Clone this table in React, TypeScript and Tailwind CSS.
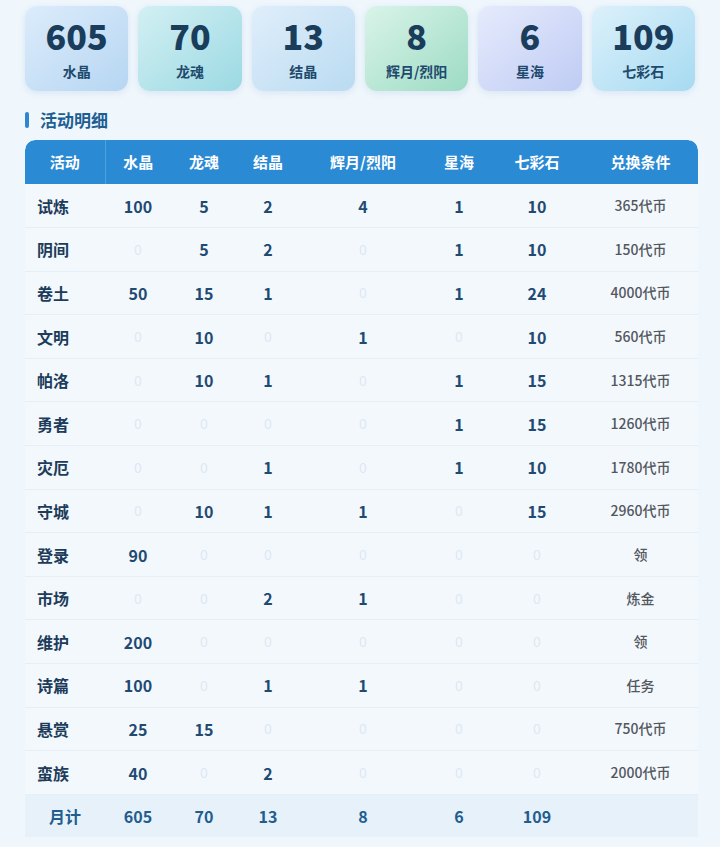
const stats = [
  { value: 605, label: "水晶", bg: "bg-gradient-to-br from-[#dcecfb] to-[#b6d6f2]" },
  { value: 70, label: "龙魂", bg: "bg-gradient-to-br from-[#d2f0f3] to-[#9bd9e3]" },
  { value: 13, label: "结晶", bg: "bg-gradient-to-br from-[#e0eefa] to-[#b9dbf2]" },
  { value: 8, label: "辉月/烈阳", bg: "bg-gradient-to-br from-[#d9f4e9] to-[#9cdbc4]" },
  { value: 6, label: "星海", bg: "bg-gradient-to-br from-[#e6ebfc] to-[#bfcbf4]" },
  { value: 109, label: "七彩石", bg: "bg-gradient-to-br from-[#dcf1fb] to-[#a6daf1]" },
];

const headers = ["活动", "水晶", "龙魂", "结晶", "辉月/烈阳", "星海", "七彩石", "兑换条件"];
const widths = ["w-[80px]", "w-[66px]", "w-[66px]", "w-[62px]", "w-[128px]", "w-[64px]", "w-[92px]", "w-[115px]"];

type Row = [string, number, number, number, number, number, number, string];

const rows: Row[] = [
  ["试炼", 100, 5, 2, 4, 1, 10, "365代币"],
  ["阴间", 0, 5, 2, 0, 1, 10, "150代币"],
  ["卷土", 50, 15, 1, 0, 1, 24, "4000代币"],
  ["文明", 0, 10, 0, 1, 0, 10, "560代币"],
  ["帕洛", 0, 10, 1, 0, 1, 15, "1315代币"],
  ["勇者", 0, 0, 0, 0, 1, 15, "1260代币"],
  ["灾厄", 0, 0, 1, 0, 1, 10, "1780代币"],
  ["守城", 0, 10, 1, 1, 0, 15, "2960代币"],
  ["登录", 90, 0, 0, 0, 0, 0, "领"],
  ["市场", 0, 0, 2, 1, 0, 0, "炼金"],
  ["维护", 200, 0, 0, 0, 0, 0, "领"],
  ["诗篇", 100, 0, 1, 1, 0, 0, "任务"],
  ["悬赏", 25, 15, 0, 0, 0, 0, "750代币"],
  ["蛮族", 40, 0, 2, 0, 0, 0, "2000代币"],
];

const totals = [605, 70, 13, 8, 6, 109];

export default function App() {
  return (
    <div className="min-h-[847px] w-[720px] bg-[#eff6fc] px-[25px] pt-[6px] font-['Noto_Sans_CJK_SC','Noto_Sans',sans-serif]">
      <div className="flex gap-[10px]">
        {stats.map((s) => (
          <div
            key={s.label}
            className={`flex h-[85px] w-[104px] flex-col items-center pt-[13px] rounded-[12px] shadow-[0_2px_6px_rgba(120,160,200,0.18)] ${s.bg}`}
          >
            <div className="text-[34px] font-black leading-[34px] text-[#1a3d5c]">{s.value}</div>
            <div className="mt-[8px] text-[14px] font-bold leading-[20px] text-[#1f4a6d]">{s.label}</div>
          </div>
        ))}
      </div>

      <div className="mt-[18px] flex items-center gap-[11px]">
        <div className="h-[16px] w-[4px] rounded-full bg-[#2e86cc]" />
        <div className="text-[17px] font-bold leading-[22px] text-[#1d5f93]">活动明细</div>
      </div>

      <table className="mt-[9px] w-[673px] table-fixed border-collapse overflow-hidden rounded-t-[10px] bg-[#f3f8fd]">
        <thead>
          <tr className="h-[44px] bg-[#2b8ad4]">
            {headers.map((h, i) => (
              <th
                key={h}
                className={`${widths[i]} text-center text-[15px] font-bold text-white ${i === 0 ? "rounded-tl-[10px] border-r border-[#4fa0de]" : ""} ${i === 7 ? "rounded-tr-[10px]" : ""}`}
              >
                {h}
              </th>
            ))}
          </tr>
        </thead>
        <tbody>
          {rows.map((r) => (
            <tr key={r[0]} className="h-[43.6px] border-b border-[#e6eff8]">
              <td className="pl-[12px] text-left text-[16px] font-bold text-[#1d3c5a]">{r[0]}</td>
              {r.slice(1, 7).map((v, i) => (
                <td
                  key={i}
                  className={`text-center ${v === 0 ? "text-[14px] font-normal text-[#dde8f2]" : "text-[16px] font-bold text-[#1f4a72]"}`}
                >
                  {v}
                </td>
              ))}
              <td className="text-center text-[14px] font-medium text-[#52575d]">{r[7]}</td>
            </tr>
          ))}
          <tr className="h-[43px] bg-[#e6f1fa]">
            <td className="text-center text-[16px] font-bold text-[#235c8e]">月计</td>
            {totals.map((t, i) => (
              <td key={i} className="text-center text-[16px] font-bold text-[#235c8e]">
                {t}
              </td>
            ))}
            <td />
          </tr>
        </tbody>
      </table>
    </div>
  );
}
